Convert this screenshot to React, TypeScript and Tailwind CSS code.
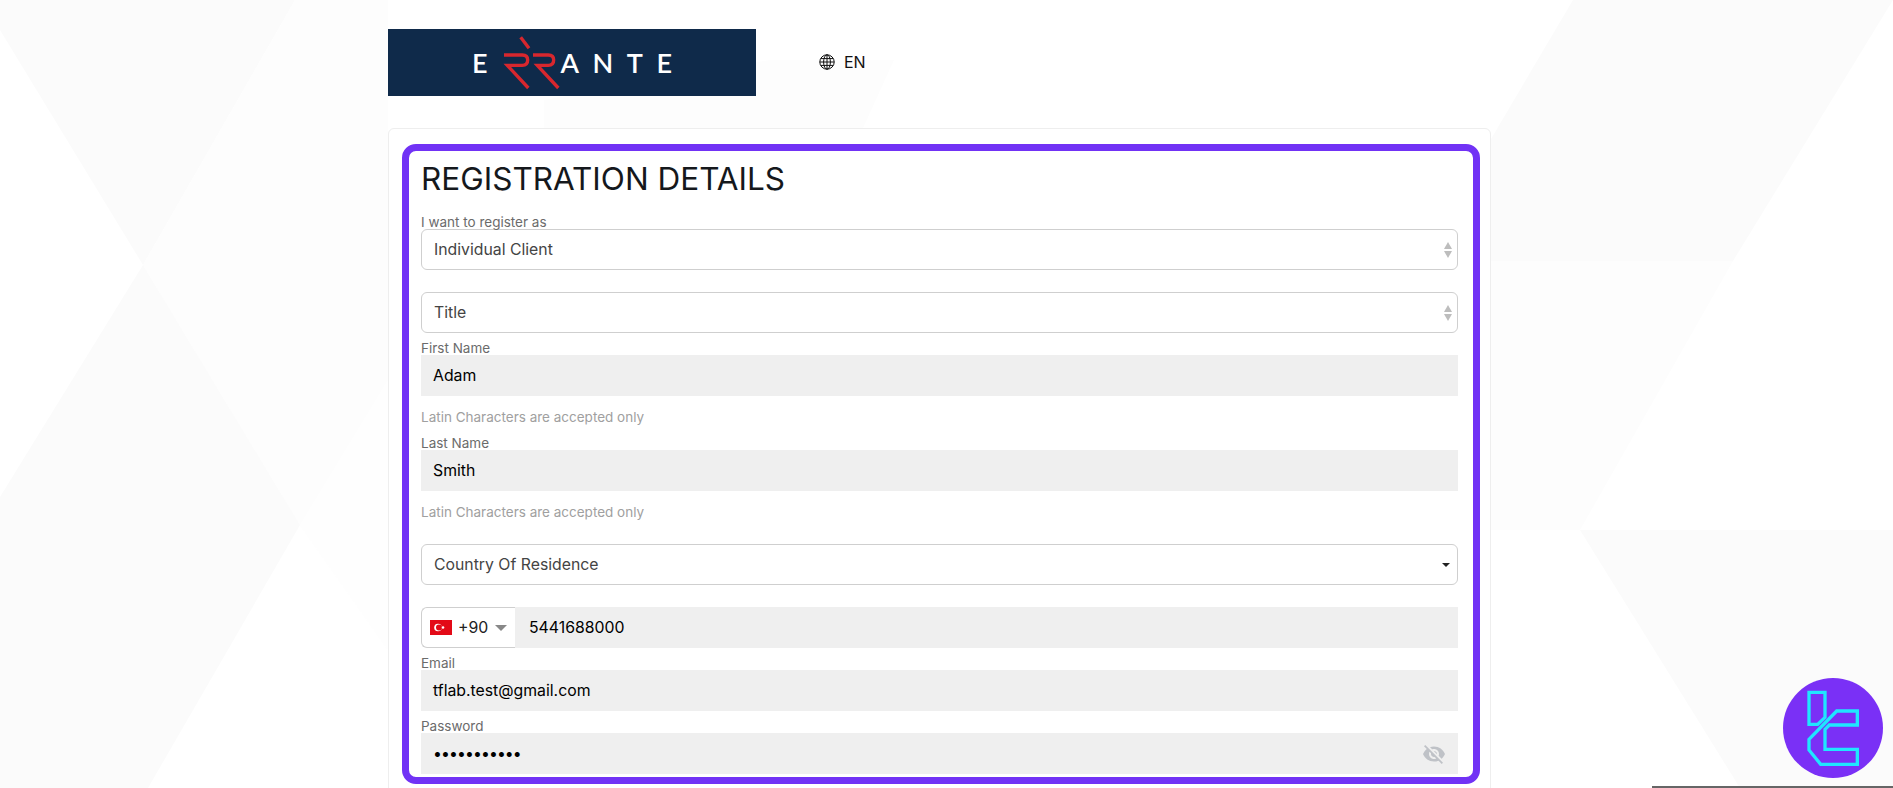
import { MdVisibilityOff } from "react-icons/md"

function Backdrop() {
  return (
    <svg className="absolute inset-0" width="1893" height="788" viewBox="0 0 1893 788">
      <polygon points="0,0 295,0 143,265 0,30" fill="#fbfbfb" />
      <polygon points="295,0 388,0 388,380 300,525 143,265" fill="#fdfdfd" />
      <polygon points="143,265 300,525 148,788 0,788 0,497" fill="#fbfbfb" />
      <polygon points="300,525 388,380 388,650" fill="#fefefe" />
      <polygon points="544,100 770,60 894,60 863,128 544,128" fill="#fdfdfd" />
      <polygon points="1573,0 1893,0 1733,261 1491,261 1491,139" fill="#fbfbfb" />
      <polygon points="1491,261 1733,261 1580,530 1491,530" fill="#fdfdfd" />
      <polygon points="1580,530 1893,530 1893,788 1740,788" fill="#fbfbfb" />
    </svg>
  )
}

function ErranteLogo() {
  return (
    <div className="flex h-[67px] w-[368px] items-center bg-[#0f2a4a] pl-[84px] font-['Lato',sans-serif] text-[27px] font-semibold leading-none text-white">
      <span>E</span>
      <svg className="ml-[1px] h-[66px] w-[72px] shrink-0" viewBox="0 0 216 198" fill="none" stroke="#d8272e" strokeWidth="10">
        <path d="M45 75 H100 Q116 75 116 90 Q116 106 100 106 H55 L118 174" />
        <path d="M95 22 L120 55" />
        <path d="M132 75 H178 Q194 75 194 90 Q194 106 178 106 H145 L208 174" />
      </svg>
      <span className="tracking-[13.5px]">ANTE</span>
    </div>
  )
}

function GlobeIcon() {
  return (
    <svg width="16" height="16" viewBox="0 0 16 16" fill="none" stroke="#111" strokeWidth="1">
      <circle cx="8" cy="8" r="7.2" />
      <ellipse cx="8" cy="8" rx="3.4" ry="7.2" />
      <path d="M8 .8 V15.2 M.8 8 H15.2 M1.8 4.6 H14.2 M1.8 11.4 H14.2" />
    </svg>
  )
}

function TfLogo() {
  return (
    <svg className="absolute bottom-0 right-0" width="118" height="118" viewBox="0 0 354 354" fill="none">
      <circle cx="174" cy="174" r="150" fill="#7a30f6" />
      <g stroke="#1fe6ff" strokeWidth="10">
        <path d="M102 67 H150 V142 L128 163 H102 Z" />
        <path d="M247 123 H185 L102 208 V240 L137 283 H247 V238 H150 V178 L163 165 H247 Z" />
      </g>
    </svg>
  )
}

function FieldLabel({ children }: { children: string }) {
  return <div className="h-[15px] text-[13.5px] leading-[17px] text-[#6b6b6b]">{children}</div>
}

function Hint() {
  return <div className="mt-[14px] h-[14px] text-[13.5px] leading-[14px] text-[#a0a0a0]">Latin Characters are accepted only</div>
}

function UpDown() {
  return (
    <svg width="8" height="16" viewBox="0 0 8 16" fill="#bdbdbd">
      <path d="M4 0 L8 7 H0 Z" />
      <path d="M0 9 H8 L4 16 Z" />
    </svg>
  )
}

function SelectBox({ value, caret }: { value: string; caret?: boolean }) {
  return (
    <div className="flex h-[41px] items-center justify-between rounded-[6px] border border-[#cfcfcf] bg-white pl-3 pr-[5px] text-[#444]">
      <span>{value}</span>
      {caret ? <div className="mr-[2px] h-0 w-0 border-x-[4px] border-t-[4px] border-x-transparent border-t-[#222]" /> : <UpDown />}
    </div>
  )
}

function GrayInput({ value }: { value: string }) {
  return <div className="flex h-[41px] items-center bg-[#efefef] pl-3 text-black">{value}</div>
}

function TurkeyFlag() {
  return (
    <svg width="22" height="15" viewBox="0 0 22 15">
      <rect width="22" height="15" fill="#e30a17" />
      <circle cx="8" cy="7.5" r="3.8" fill="#fff" />
      <circle cx="9" cy="7.5" r="3" fill="#e30a17" />
      <circle cx="13" cy="7.5" r="1.3" fill="#fff" />
    </svg>
  )
}

export default function App() {
  return (
    <div className="relative h-[788px] w-full overflow-hidden bg-white font-['Inter',sans-serif] text-[15.8px]">
      <Backdrop />

      <div className="relative ml-[388px] w-[1103px]">
        <header className="flex items-center pt-[29px]">
          <ErranteLogo />
          <div className="ml-[63px] flex items-center gap-[9px] pb-[2px] text-[16px] text-[#111]">
            <GlobeIcon />
            <span>EN</span>
          </div>
        </header>

        <div className="mt-[32px] h-[720px] rounded-[6px] border border-[#eeeeee] bg-white pl-[13px] pr-[10px] pt-[15px]">
          <section className="h-[640px] rounded-[14px] border-[7px] border-[#7132f5] pl-[12px] pr-[15px] pt-[10px]">
            <h1 className="h-[36px] text-[31.5px] font-normal leading-[36px] text-[#15181c]">REGISTRATION DETAILS</h1>

            <div className="mt-[17px]">
              <FieldLabel>I want to register as</FieldLabel>
              <SelectBox value="Individual Client" />
            </div>

            <div className="mt-[22px]">
              <SelectBox value="Title" />
            </div>

            <div className="mt-[7px]">
              <FieldLabel>First Name</FieldLabel>
              <GrayInput value="Adam" />
              <Hint />
            </div>

            <div className="mt-[11px]">
              <FieldLabel>Last Name</FieldLabel>
              <GrayInput value="Smith" />
              <Hint />
            </div>

            <div className="mt-[25px]">
              <SelectBox value="Country Of Residence" caret />
            </div>

            <div className="mt-[22px] flex h-[41px]">
              <div className="flex w-[94px] items-center rounded-l-[6px] border border-r-0 border-[#cfcfcf] bg-white pl-2 text-[#222]">
                <TurkeyFlag />
                <span className="ml-[6px]">+90</span>
                <div className="ml-[7px] h-0 w-0 border-x-[6px] border-t-[6px] border-x-transparent border-t-[#888]" />
              </div>
              <div className="flex flex-1 items-center bg-[#efefef] pl-[14px] text-black">5441688000</div>
            </div>

            <div className="mt-[7px]">
              <FieldLabel>Email</FieldLabel>
              <GrayInput value="tflab.test@gmail.com" />
            </div>

            <div className="mt-[7px]">
              <FieldLabel>Password</FieldLabel>
              <div className="flex h-[41px] items-center justify-between bg-[#efefef] pl-3 pr-[12px] text-black">
                <span className="tracking-[-0.9px]">•••••••••••</span>
                <MdVisibilityOff className="text-[24px] text-[#bfc2c7]" />
              </div>
            </div>
          </section>
        </div>
      </div>

      <div className="absolute bottom-0 right-0 h-[2px] w-[241px] bg-[#666]" />
      <TfLogo />
    </div>
  )
}
